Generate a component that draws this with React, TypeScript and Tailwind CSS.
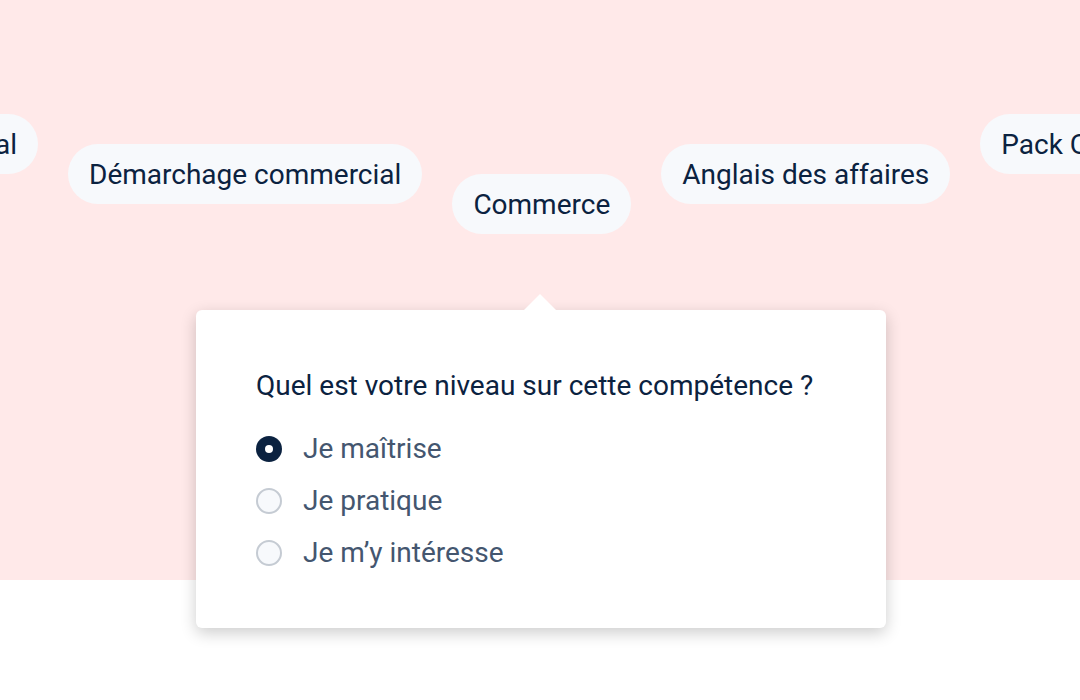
import React from 'react';

const skills = [
  { label: 'Démarchage commercial', offset: 'mt-[30px]' },
  { label: 'Commerce', offset: 'mt-[60px]' },
  { label: 'Anglais des affaires', offset: 'mt-[30px]' },
  { label: 'Pack Office', offset: 'mt-0' },
];

const levels = ['Je maîtrise', 'Je pratique', "Je m’y intéresse"];

function Pill({ label, className = '' }: { label: string; className?: string }) {
  return (
    <div
      className={`${className} h-[60px] pt-[1px] px-[21px] rounded-full bg-[#f7f9fc] flex items-center text-[28px] text-[#0b2240] shrink-0 whitespace-nowrap`}
    >
      {label}
    </div>
  );
}

function Radio({ checked }: { checked: boolean }) {
  if (checked) {
    return (
      <span className="w-[26px] h-[26px] rounded-full bg-[#0b2240] flex items-center justify-center shrink-0">
        <span className="w-[8px] h-[8px] rounded-full bg-white" />
      </span>
    );
  }
  return <span className="w-[26px] h-[26px] rounded-full border-2 border-[#c5cbd3] bg-[#f7f9fc] shrink-0" />;
}

export default function App() {
  return (
    <div className="w-[1080px] h-[700px] bg-white overflow-hidden relative font-['Roboto',sans-serif]">
      <div className="h-[580px] bg-[#ffe9e9] pt-[114px]">
        <div className="flex items-start gap-[30px]">
          {/* first pill spills off the left edge */}
          <div className="w-[38px] flex justify-end shrink-0">
            <Pill label="Management commercial" />
          </div>
          {skills.map((s) => (
            <Pill key={s.label} label={s.label} className={s.offset} />
          ))}
        </div>
      </div>

      <div className="absolute left-[196px] top-[310px] w-[690px] h-[318px] bg-white rounded-[6px] shadow-[0_5px_16px_rgba(0,0,0,0.2)] px-[60px] pt-[58px]">
        <div className="absolute left-[328px] top-[-16px] w-0 h-0 border-x-[16px] border-x-transparent border-b-[16px] border-b-white" />
        <p className="text-[28px] leading-[36px] text-[#0b2240]">Quel est votre niveau sur cette compétence ?</p>
        <div className="mt-[25px] flex flex-col gap-[12px]">
          {levels.map((l, i) => (
            <label key={l} className="flex items-center gap-[21px] h-[40px]">
              <Radio checked={i === 0} />
              <span className="text-[28px] text-[#44566f]">{l}</span>
            </label>
          ))}
        </div>
      </div>
    </div>
  );
}
